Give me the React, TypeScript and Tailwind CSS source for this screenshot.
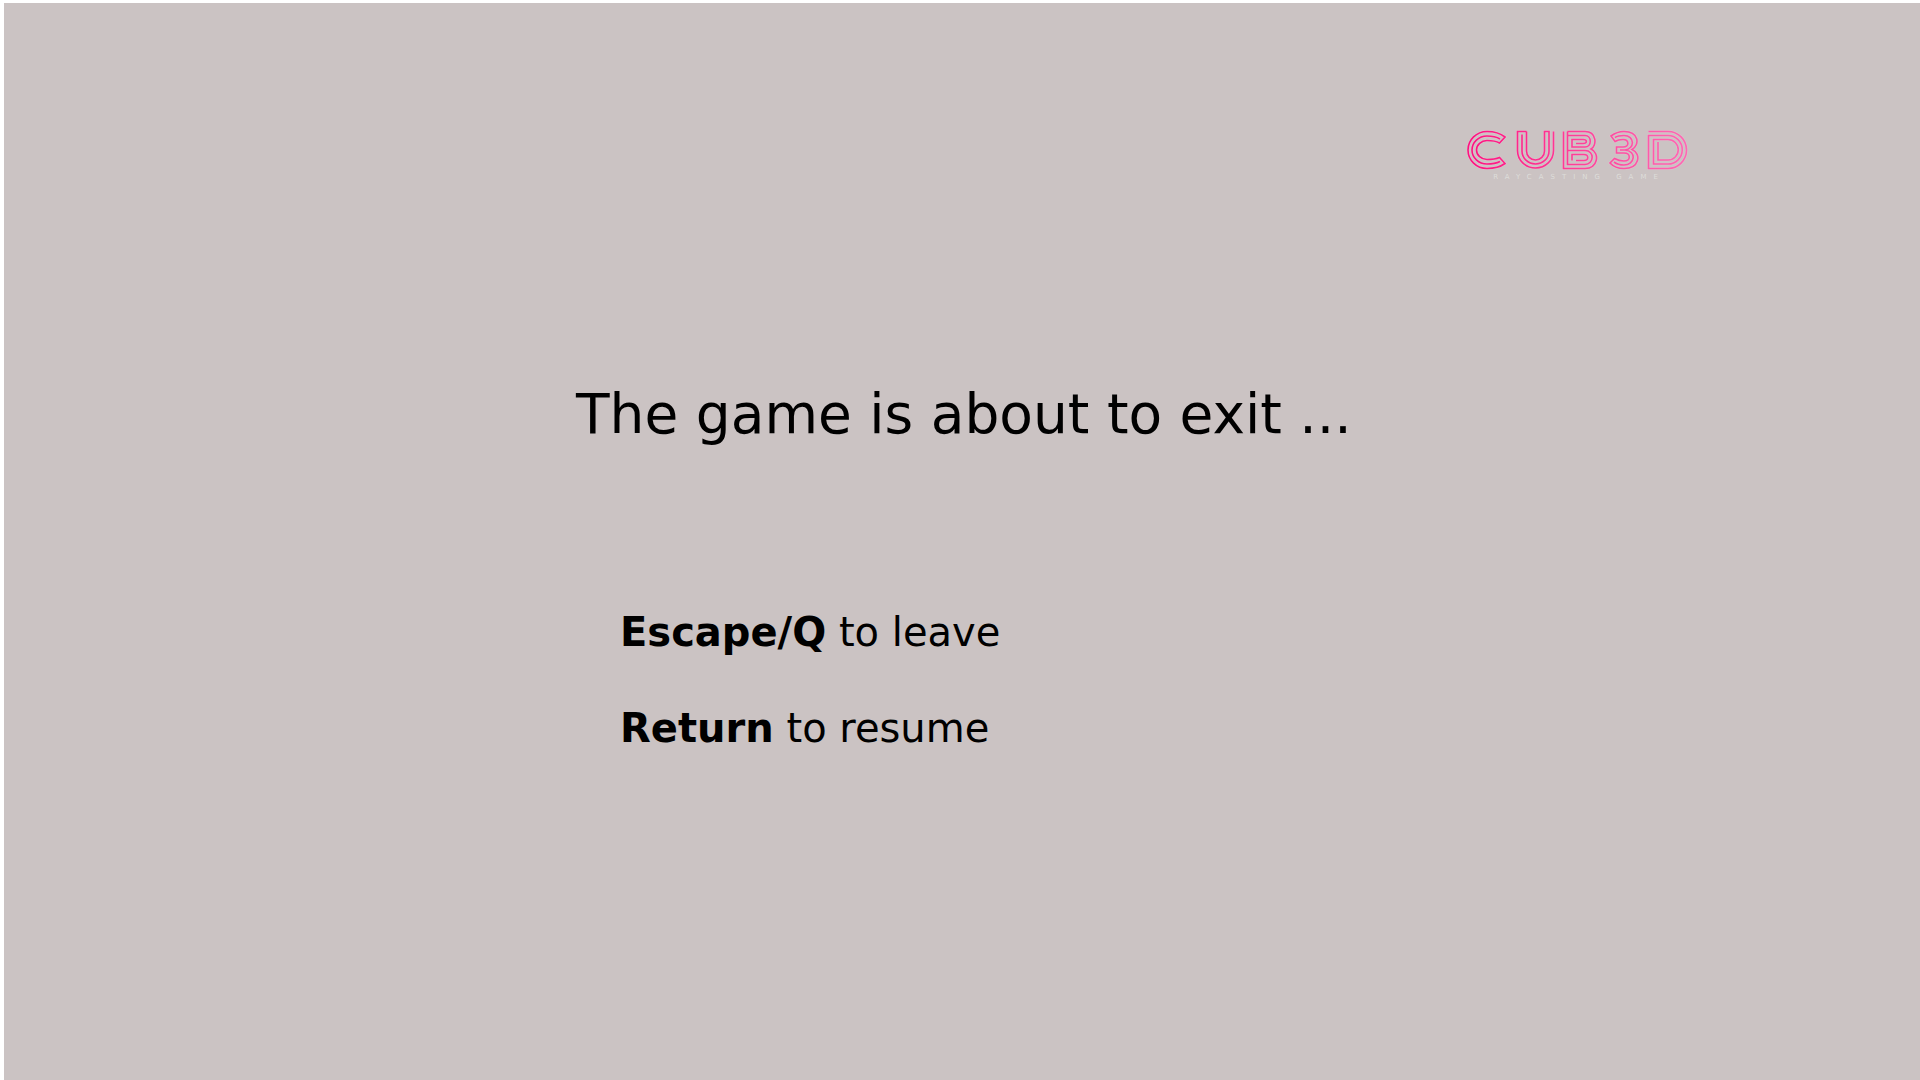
const letters = [
  // C
  "M1505 137Q1498 131.5 1487 131.5A19 18.5 0 0 0 1487 168.5Q1498 168.5 1505 163.5L1499.5 157.5Q1495 159.5 1487 159.5A10.5 9.5 0 0 1 1487 140.5Q1495 140.5 1499.5 143Z",
  "M1500 139Q1495 136 1487 136A15 14 0 0 0 1487 164Q1495 164 1500 161.500",
  // U
  "M1526.5 131.5H1517.5V150.5A18 17.5 0 0 0 1553.5 150.5V131.5",
  "M1526.5 131.5V151A9 9 0 0 0 1544.5 151V131.5H1549V151A13.5 13 0 0 1 1522 151V134.5",
  // B
  "M1567.5 131.5H1585C1597 131.5 1597 146 1591 149C1600 153 1598 168.5 1585 168.5H1563.5V131.5",
  "M1567.5 131.5V164.5H1585C1594 164.5 1595 150.5 1585 150.5H1567.500",
  "M1567.5 135.5H1585C1592 135.5 1592 147 1585 147H1572V139.5H1583C1587.500 139.5 1587.500 143.5 1583 143.5H1576",
  "M1576 160.5H1584C1589 160.5 1589 154.5 1584 154.5H1572V160.500",
  // 3
  "M1611 136Q1617 131.5 1624 131.5C1639 131.5 1640 145 1632 149.5C1642 154 1639 168.5 1624 168.5Q1615 168.5 1610 163L1614.5 158.5Q1619 161 1624 161C1631 161 1631 153 1624 153H1616.5V147H1623C1630 147 1629 139.5 1623 139.5Q1618 139.5 1615 141.5Z",
  "M1615 137.5Q1618 135.5 1624 135.5C1635 135.5 1635 149 1625 150H1620M1625 150C1637 151 1635 165 1624 165Q1618 165 1614 162",
  // D
  "M1648.5 131.5H1668A18.5 18.5 0 0 1 1668 168.5H1648.5V135.5H1668A14.25 14.25 0 0 1 1668 164H1653.5V139.5H1668A10.25 10.25 0 0 1 1668 160H1658V142",
].join("");

function Logo() {
  return (
    <svg role="img" aria-label="CUB 3D" width="224" height="44" viewBox="1465 128 224 44" fill="none">
      <defs>
        <linearGradient id="pink" gradientUnits="userSpaceOnUse" x1="1467" y1="0" x2="1688" y2="0">
          <stop offset="0" stopColor="#ff1080" />
          <stop offset="0.5" stopColor="#ff4099" />
          <stop offset="1" stopColor="#ff68b4" />
        </linearGradient>
      </defs>
      <path d={letters} stroke="#e8bfd2" strokeOpacity="0.4" strokeWidth="3" />
      <path d={letters} stroke="url(#pink)" strokeWidth="1.6" />
    </svg>
  );
}

export default function App() {
  return (
    <main className="min-h-screen border-l-4 border-t-[3px] border-white bg-[#cbc3c3] text-black font-['DejaVu_Sans',sans-serif]">
      <header className="flex justify-end pt-[125px] pr-[231px]">
        <div className="flex flex-col items-center">
          <Logo />
          <p className="pl-1 text-[7px] leading-[10px] tracking-[7px] text-[#dedddA]">RAYCASTING GAME</p>
        </div>
      </header>
      <h1 className="pl-[572px] pt-[200px] text-[55px] leading-[64px]">The game is about to exit ...</h1>
      <div className="flex flex-col gap-12 pl-[616px] pt-[162px] text-[40px] leading-[48px]">
        <p><kbd className="font-bold font-['DejaVu_Sans',sans-serif]">Escape/Q</kbd> to leave</p>
        <p><kbd className="font-bold font-['DejaVu_Sans',sans-serif]">Return</kbd> to resume</p>
      </div>
    </main>
  );
}
